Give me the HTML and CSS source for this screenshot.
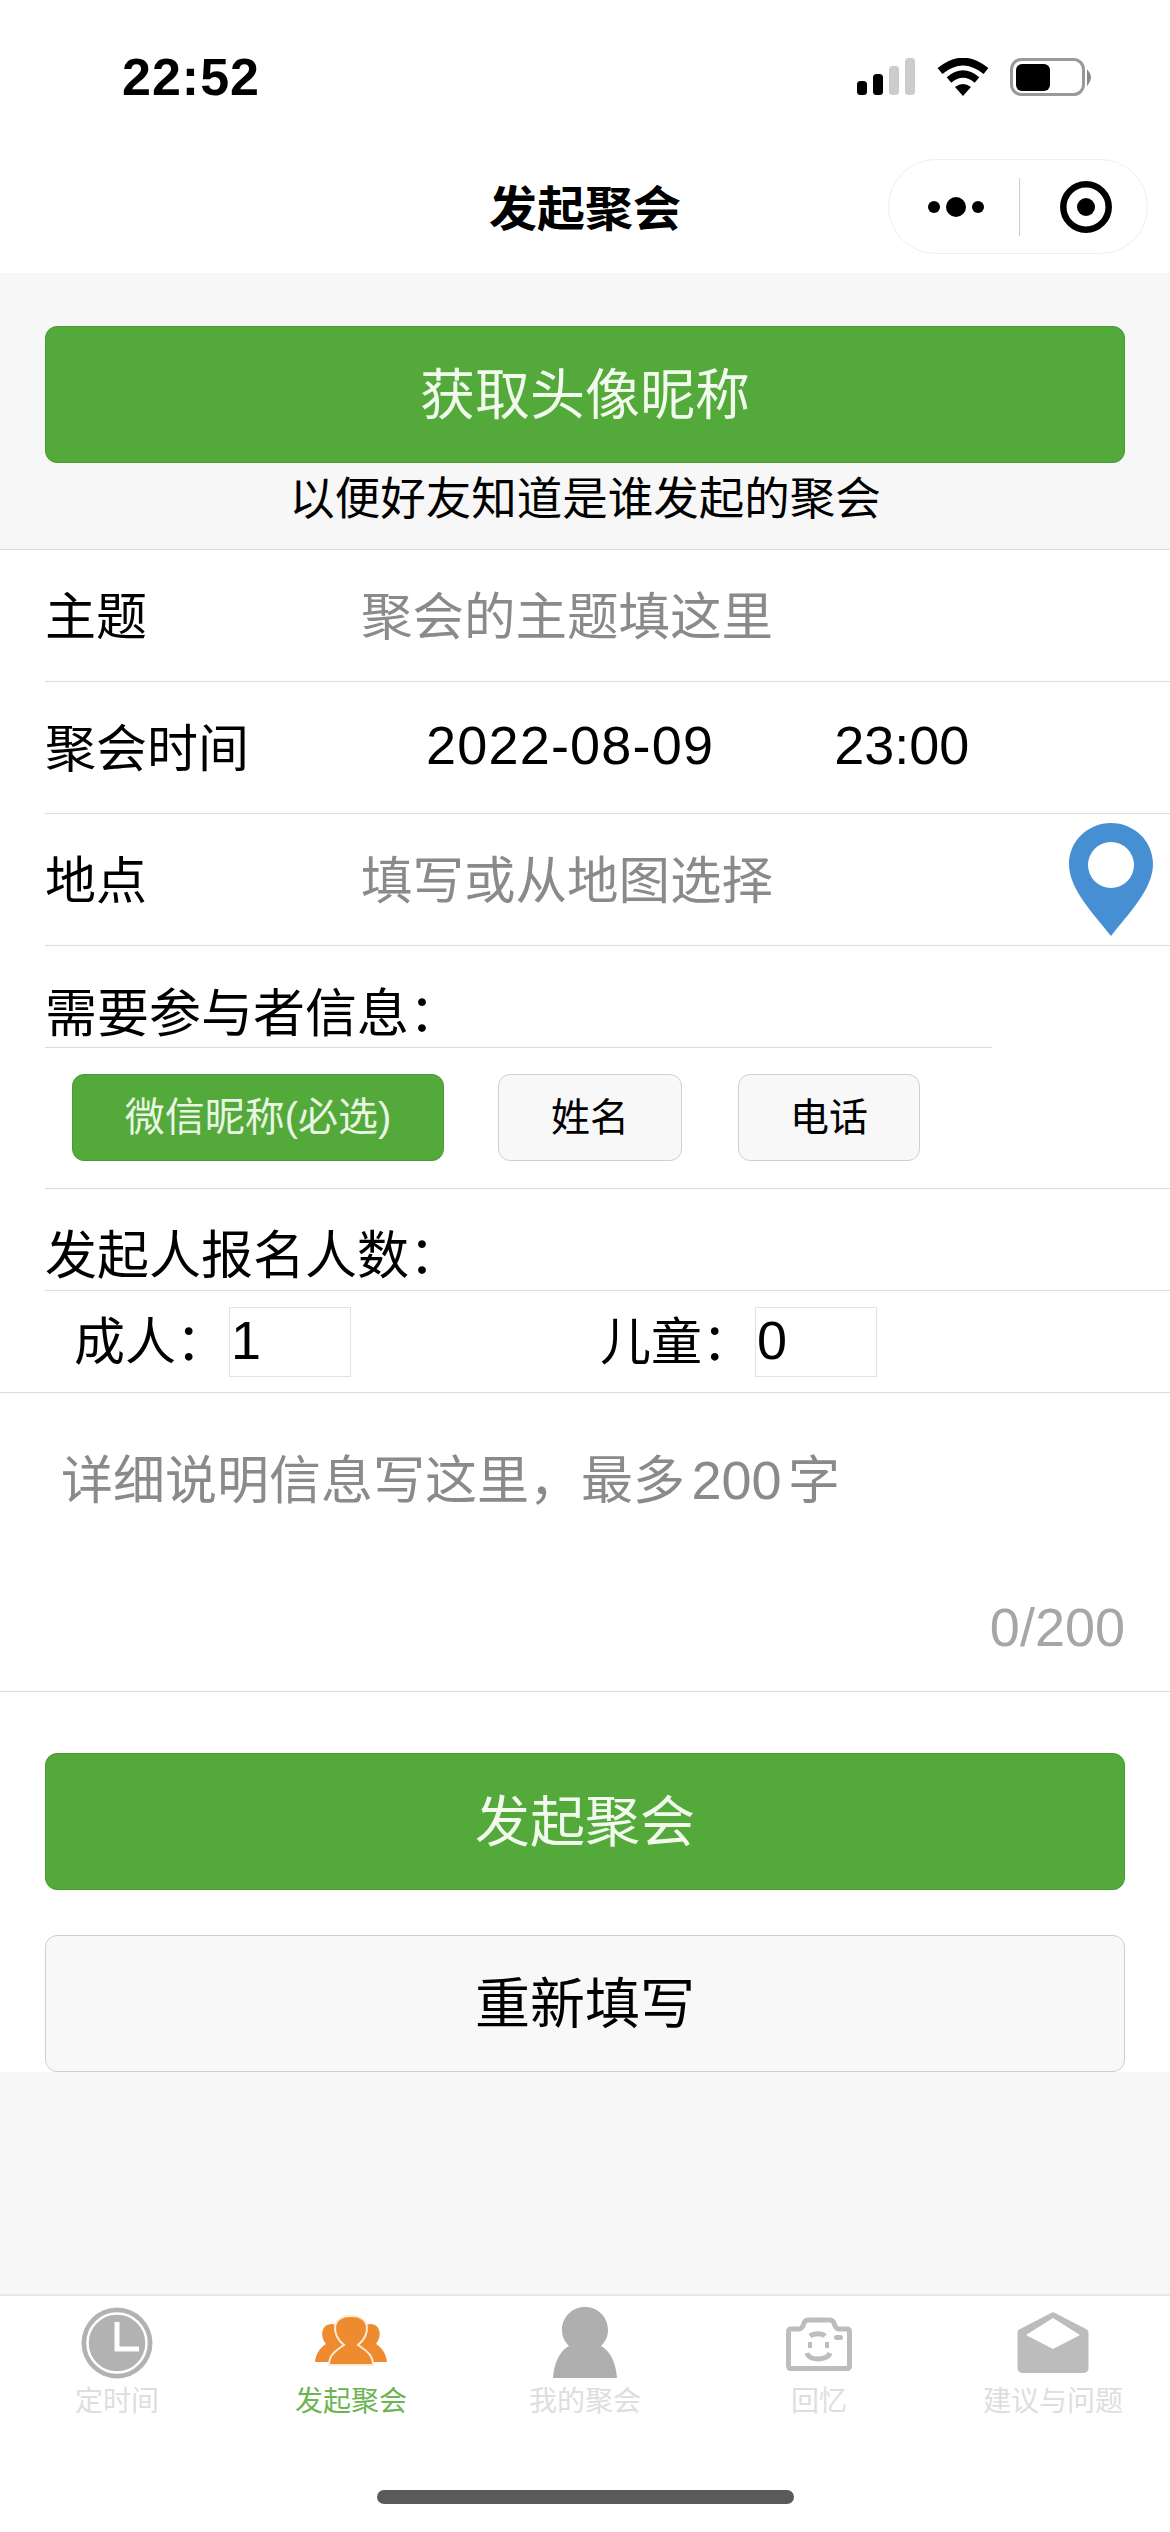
FILE: index.html
```html
<!DOCTYPE html>
<html lang="zh-CN">

<head>
    <meta charset="UTF-8">
    <meta name="viewport" content="width=device-width, initial-scale=1.0">
    <title>发起聚会</title>
    <link rel="stylesheet" href="styles.css">
</head>

<body>
    <div class="page">
        <div class="status-bar">
            <span class="clock">22:52</span>
            <div class="status-icons">
                <svg class="icon-signal" width="58" height="37" viewBox="0 0 58 37">
                    <rect x="0" y="23" width="10" height="14" rx="3.5" fill="#000" />
                    <rect x="16" y="16" width="10" height="21" rx="3.5" fill="#000" />
                    <rect x="32" y="8" width="10" height="29" rx="3.5" fill="#ccc" />
                    <rect x="48" y="0" width="10" height="37" rx="3.5" fill="#ccc" />
                </svg>
                <svg class="icon-wifi" width="52" height="38" viewBox="0 0 52 38">
                    <path d="M3 13 Q26 -6 49 13" fill="none" stroke="#000" stroke-width="7.5" />
                    <path d="M12 22 Q26 10 40 22" fill="none" stroke="#000" stroke-width="7" />
                    <path d="M18 29 Q26 23 34 29 L26 38 Z" fill="#000" />
                </svg>
                <svg class="icon-battery" width="83" height="38" viewBox="0 0 83 38">
                    <rect x="1.5" y="1.5" width="72" height="35" rx="10" fill="none" stroke="#999" stroke-width="3" />
                    <rect x="6" y="6" width="34" height="27" rx="6" fill="#000" />
                    <path d="M78 14 Q82 19 78 25 Z" fill="#888" stroke="#888" stroke-width="2" />
                </svg>
            </div>
        </div>

        <div class="nav-bar">
            <span class="nav-title">发起聚会</span>
            <div class="capsule">
                <svg width="58" height="24" viewBox="0 0 58 24">
                    <circle cx="6" cy="12" r="6" fill="#000" />
                    <circle cx="28" cy="12" r="10" fill="#000" />
                    <circle cx="50" cy="12" r="6" fill="#000" />
                </svg>
                <span class="capsule-line"></span>
                <svg width="52" height="52" viewBox="0 0 52 52">
                    <circle cx="26" cy="26" r="22.7" fill="none" stroke="#000" stroke-width="6.5" />
                    <circle cx="26" cy="26" r="9" fill="#000" />
                </svg>
            </div>
        </div>

        <div class="profile-box">
            <div class="btn btn-green">获取头像昵称</div>
            <p class="profile-note">以便好友知道是谁发起的聚会</p>
        </div>

        <div class="form">
            <div class="row">
                <span class="row-label">主题</span>
                <span class="placeholder">聚会的主题填这里</span>
            </div>
            <div class="row">
                <span class="row-label">聚会时间</span>
                <span class="date">2022-08-09</span>
                <span class="time">23:00</span>
            </div>
            <div class="row">
                <span class="row-label">地点</span>
                <span class="placeholder">填写或从地图选择</span>
                <svg class="pin" width="84" height="113" viewBox="0 0 84 113">
                    <path fill-rule="evenodd" fill="#468fd3" d="M42 0C65 0 84 18 84 41C84 66 60 90 42 113C24 90 0 66 0 41C0 18 19 0 42 0ZM42 19A23 23 0 1 0 42 65A23 23 0 1 0 42 19Z" />
                </svg>
            </div>

            <div class="info-block">
                <div class="info-title">需要参与者信息：</div>
                <div class="chips">
                    <span class="chip chip-on">微信昵称(必选)</span>
                    <span class="chip chip-name">姓名</span>
                    <span class="chip chip-phone">电话</span>
                </div>
            </div>

            <div class="count-title">发起人报名人数：</div>
            <div class="counts">
                <span class="count-label">成人：</span>
                <span class="count-input">1</span>
                <span class="count-label count-second">儿童：</span>
                <span class="count-input">0</span>
            </div>

            <div class="detail">
                <div class="detail-text">详细说明信息写这里，最多 <span class="detail-count">200</span> 字</div>
                <div class="detail-num">0/200</div>
            </div>

            <div class="actions">
                <div class="btn btn-green">发起聚会</div>
                <div class="btn btn-gray">重新填写</div>
            </div>
        </div>

        <div class="tab-bar">
            <div class="tab">
                <svg width="72" height="72" viewBox="0 0 72 72">
                    <circle cx="36" cy="36" r="35.5" fill="#b2b2b2" />
                    <circle cx="36" cy="36" r="29.5" fill="none" stroke="#fff" stroke-width="2.5" />
                    <path d="M36 15V42H58" fill="none" stroke="#fff" stroke-width="5" />
                </svg>
                <span>定时间</span>
            </div>
            <div class="tab tab-on">
                <svg width="72" height="72" viewBox="0 0 72 72">
                    <path fill="#ee8b2f" d="M0 55C1 46 5 41 11 37C4 28 7 17 17 17C24 17 28 30 28 37L14 55Z" />
                    <path fill="#ee8b2f" d="M72 55C71 46 67 41 61 37C68 28 65 17 55 17C48 17 44 30 44 37L58 55Z" />
                    <path fill="#ee8b2f" stroke="#fde9d4" stroke-width="2" d="M14 58C14 47 22 43 29 38C16 28 16 9 36 9C56 9 56 28 43 38C50 43 58 47 58 58Z" />
                </svg>
                <span>发起聚会</span>
            </div>
            <div class="tab">
                <svg width="72" height="72" viewBox="0 0 72 72">
                    <path fill="#afafaf" d="M36 0C49 0 59 10 59 23C59 30 56 35 52 39C62 44 67 57 68 71H4C5 57 10 44 20 39C16 35 13 30 13 23C13 10 23 0 36 0Z" />
                </svg>
                <span>我的聚会</span>
            </div>
            <div class="tab">
                <svg width="72" height="72" viewBox="0 0 72 72">
                    <path fill="none" stroke="#bdbdbd" stroke-width="5" stroke-linejoin="round" d="M8 22H16C19 22 20 20 21 16C22 13 24 13 26 13H46C48 13 50 13 51 16C52 20 53 22 56 22H64C66 22 66.5 23 66.5 25V59C66.5 61 66 61.5 64 61.5H8C6 61.5 5.5 61 5.5 59V25C5.5 23 6 22 8 22Z" />
                    <path fill="none" stroke="#bdbdbd" stroke-width="5" d="M24 46C26 54 44 54 47 46M27 29C31 26 39 26 42 29" />
                    <rect x="25" y="35" width="4" height="6" fill="#bdbdbd" />
                    <rect x="42" y="35" width="4" height="6" fill="#bdbdbd" />
                    <rect x="51" y="28" width="9" height="5" rx="2.5" fill="#bdbdbd" />
                </svg>
                <span>回忆</span>
            </div>
            <div class="tab">
                <svg width="72" height="72" viewBox="0 0 72 72">
                    <path fill-rule="evenodd" fill="#bcbcbc" d="M36 5L69 22C71 23 71.5 24 71.5 26V61C71.5 64 69 66 66 66H6C3 66 0.5 64 0.5 61V26C0.5 24 1 23 3 22ZM36 11L9 28L36 42L63 28Z" />
                </svg>
                <span>建议与问题</span>
            </div>
        </div>

        <div class="home-area">
            <span class="home-bar"></span>
        </div>
    </div>
</body>

</html>
```

FILE: styles.css
```css
* {
    box-sizing: border-box;
}

body {
    margin: 0;
    font-family: "Liberation Sans", "Noto Sans CJK SC", sans-serif;
    color: #000;
    background: #fff;
}

.page {
    display: flex;
    flex-direction: column;
    width: 1170px;
    height: 2532px;
    background: #f7f7f7;
    overflow: hidden;
}

.status-bar {
    display: flex;
    justify-content: space-between;
    align-items: center;
    height: 137px;
    padding: 16px 79px 0 122px;
    background: #fff;
}

.clock {
    font-size: 52px;
    font-weight: bold;
    letter-spacing: 1px;
}

.status-icons {
    display: flex;
    align-items: center;
}

.icon-wifi {
    margin-left: 22px;
}

.icon-battery {
    margin-left: 21px;
    margin-right: -2px;
}

.nav-bar {
    position: relative;
    display: flex;
    justify-content: center;
    align-items: center;
    height: 136px;
    background: #fff;
}

.nav-title {
    font-size: 48px;
    font-weight: bold;
}

.capsule {
    position: absolute;
    top: 22px;
    right: 22px;
    display: flex;
    align-items: center;
    width: 260px;
    height: 95px;
    padding-left: 39px;
    border: 1px solid #eee;
    border-radius: 48px;
}

.capsule-line {
    width: 1px;
    height: 58px;
    margin: 0 40px 0 33px;
    background: #ccc;
}

.profile-box {
    padding: 53px 45px 0;
    height: 276px;
}

.btn {
    display: flex;
    justify-content: center;
    align-items: center;
    height: 137px;
    padding-bottom: 9px;
    border-radius: 12px;
    font-size: 55px;
}

.btn-green {
    color: #f2faee;
    background: #53a93a;
    border: 1px solid #4a9a33;
}

.btn-gray {
    margin-top: 45px;
    background: #f8f8f8;
    border: 1px solid #cfcfcf;
}

.profile-note {
    margin: 0;
    height: 70px;
    line-height: 74px;
    text-align: center;
    font-size: 45.5px;
}

.form {
    background: #fff;
    border-top: 1px solid #dcdcdc;
}

.row {
    display: flex;
    align-items: center;
    position: relative;
    height: 132px;
    padding-bottom: 6px;
    margin-left: 45px;
    border-bottom: 1px solid #dcdcdc;
    font-size: 51px;
}

.row-label {
    width: 316px;
    flex: none;
}

.placeholder {
    font-size: 51.5px;
    color: #8a8a8a;
}

.date {
    margin-left: 65px;
    font-size: 54px;
    letter-spacing: 1.2px;
}

.time {
    margin-left: 120px;
    font-size: 54px;
}

.pin {
    position: absolute;
    right: 17px;
    top: 9px;
}

.info-block {
    height: 243px;
    margin-left: 45px;
    border-bottom: 1px solid #dcdcdc;
}

.info-title {
    width: 947px;
    height: 102px;
    line-height: 136px;
    font-size: 52px;
    white-space: nowrap;
    border-bottom: 1px solid #dcdcdc;
}

.chips {
    display: flex;
    padding: 26px 0 0 27px;
}

.chip {
    display: flex;
    justify-content: center;
    align-items: center;
    height: 87px;
    padding-bottom: 8px;
    border-radius: 12px;
    font-size: 39px;
    white-space: nowrap;
    background: #f8f8f8;
    border: 1px solid #cfcfcf;
}

.chip-on {
    width: 372px;
    font-size: 40px;
    color: #e9f6e3;
    background: #53a93a;
    border-color: #4a9a33;
}

.chip-name {
    width: 184px;
    margin-left: 54px;
}

.chip-phone {
    width: 182px;
    margin-left: 56px;
}

.count-title {
    height: 102px;
    margin-left: 45px;
    line-height: 135px;
    font-size: 52px;
    border-bottom: 1px solid #dcdcdc;
}

.counts {
    display: flex;
    align-items: center;
    height: 102px;
    padding-left: 74px;
    font-size: 51px;
    border-bottom: 1px solid #dcdcdc;
}

.count-label {
    width: 155px;
    padding-bottom: 8px;
    white-space: nowrap;
}

.count-second {
    margin-left: 249px;
}

.count-input {
    width: 122px;
    height: 70px;
    line-height: 64px;
    padding-left: 1px;
    font-size: 54px;
    border: 1px solid #e2e2e2;
}

.detail {
    height: 299px;
    padding: 57px 45px 0 61px;
    border-bottom: 1px solid #dcdcdc;
}

.detail-text {
    font-size: 52px;
    line-height: 60px;
    word-spacing: -8px;
    color: #8a8a8a;
}

.detail-count {
    font-size: 54px;
}

.detail-num {
    margin-top: 85px;
    text-align: right;
    font-size: 54px;
    color: #a6a6a6;
}

.actions {
    padding: 61px 45px 0;
}

.tab-bar {
    display: grid;
    grid-template-columns: repeat(5, 234px);
    margin-top: auto;
    height: 138px;
    padding-top: 11px;
    background: #fff;
    border-top: 2px solid #e8e8e8;
}

.tab {
    display: flex;
    flex-direction: column;
    align-items: center;
    font-size: 28px;
    color: #dedede;
}

.tab span {
    margin-top: 3px;
    line-height: 40px;
    white-space: nowrap;
}

.tab-on {
    color: #6bb553;
}

.home-area {
    display: flex;
    justify-content: center;
    height: 100px;
    padding-top: 58px;
    background: #fff;
}

.home-bar {
    width: 417px;
    height: 14px;
    border-radius: 7px;
    background: #5a5a5a;
}
```
